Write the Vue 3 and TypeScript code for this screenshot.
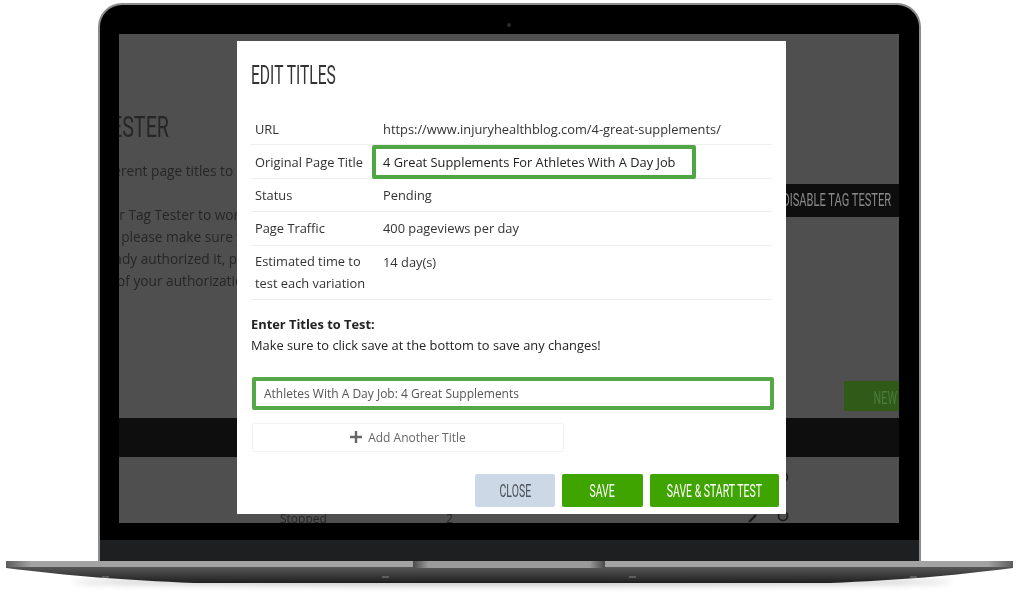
<script setup lang="ts">
interface InfoRow {
  label: string;
  value: string;
  highlight?: boolean;
}

const rows: InfoRow[] = [
  { label: "URL", value: "https://www.injuryhealthblog.com/4-great-supplements/" },
  { label: "Original Page Title", value: "4 Great Supplements For Athletes With A Day Job", highlight: true },
  { label: "Status", value: "Pending" },
  { label: "Page Traffic", value: "400 pageviews per day" },
  { label: "Estimated time to test each variation", value: "14 day(s)" },
];

// text behind the dialog, cut off by the left edge of the screen
const backLines = [
  { text: "Test different page titles to", left: -57 },
  { text: "", left: 0 },
  { text: "For Tag Tester to work", left: -15 },
  { text: "first, please make sure you", left: -30 },
  { text: "If already authorized it, please", left: -41 },
  { text: "end of your authorization", left: -30 },
];
</script>

<template>
  <div class="page">
    <div class="lid">
      <i class="camera"></i>
      <div class="screen">
        <div class="back-title"><span class="cond">TAG TESTER</span></div>
        <div class="back-text">
          <div
            v-for="(line, i) in backLines"
            :key="i"
            class="back-line"
            :style="{ marginLeft: line.left + 'px' }"
          >{{ line.text }}</div>
        </div>
        <div class="disable"><span class="cond">DISABLE TAG TESTER</span></div>
        <div class="new-row"><div class="new-btn"><span class="cond">NEW</span></div></div>
        <div class="black-bar"></div>
        <div class="stopped">
          <svg class="st-icons st-icons-up" width="50" height="14" viewBox="0 0 50 14">
            <circle cx="35" cy="7" r="4.5" stroke="#1c1c1c" stroke-width="1.6" fill="none" />
          </svg>
          <span class="st-name">Stopped</span>
          <span class="st-num">2</span>
          <svg class="st-icons" width="50" height="14" viewBox="0 0 50 14">
            <path d="M1 13 L8 6" stroke="#1c1c1c" stroke-width="2.4" fill="none" />
            <circle cx="35" cy="7" r="4.5" stroke="#1c1c1c" stroke-width="1.6" fill="none" />
          </svg>
        </div>

        <div class="modal">
          <h2 class="modal-title"><span class="cond">EDIT TITLES</span></h2>
          <div class="info">
            <div v-for="row in rows" :key="row.label" class="info-row">
              <div class="info-label">{{ row.label }}</div>
              <div class="info-value">
                <span v-if="row.highlight" class="hl">{{ row.value }}</span>
                <template v-else>{{ row.value }}</template>
              </div>
            </div>
          </div>
          <div class="enter">
            <b>Enter Titles to Test:</b>
            <div>Make sure to click save at the bottom to save any changes!</div>
          </div>
          <div class="title-input">Athletes With A Day Job: 4 Great Supplements</div>
          <div class="add-title">
            <svg width="12" height="12" viewBox="0 0 12 12">
              <path d="M6 0 V12 M0 6 H12" stroke="#666" stroke-width="2.4" />
            </svg>
            <span>Add Another Title</span>
          </div>
          <div class="actions">
            <div class="btn btn-close"><span class="cond">CLOSE</span></div>
            <div class="btn btn-save"><span class="cond">SAVE</span></div>
            <div class="btn btn-start"><span class="cond">SAVE &amp; START TEST</span></div>
          </div>
        </div>
      </div>
      <div class="chin"></div>
    </div>

    <svg class="base" width="1024" height="31" viewBox="0 0 1024 31">
      <defs>
        <linearGradient id="body" x1="0" y1="0" x2="0" y2="1">
          <stop offset="0" stop-color="#6a6a6a" />
          <stop offset="0.45" stop-color="#4a4a4a" />
          <stop offset="1" stop-color="#1f1f1f" />
        </linearGradient>
        <linearGradient id="band" x1="0" y1="0" x2="1" y2="0">
          <stop offset="0" stop-color="#5c5c5c" />
          <stop offset="0.025" stop-color="#a3a3a3" />
          <stop offset="0.975" stop-color="#a3a3a3" />
          <stop offset="1" stop-color="#5c5c5c" />
        </linearGradient>
        <linearGradient id="notch" x1="0" y1="0" x2="1" y2="0">
          <stop offset="0" stop-color="#4a4a4a" />
          <stop offset="0.08" stop-color="#9a9a9a" />
          <stop offset="0.92" stop-color="#9a9a9a" />
          <stop offset="1" stop-color="#4a4a4a" />
        </linearGradient>
        <filter id="soft" x="-5%" y="-100%" width="110%" height="300%">
          <feGaussianBlur stdDeviation="3" />
        </filter>
      </defs>
      <ellipse cx="512" cy="21" rx="440" ry="4" fill="#000" opacity="0.22" filter="url(#soft)" />
      <path d="M6 0 H1013 V7 C950 15 900 19 830 22 H194 C124 19 70 15 6 7 Z" fill="url(#body)" />
      <rect x="6" y="0" width="1007" height="6" fill="url(#band)" />
      <rect x="413" y="0" width="192" height="7" fill="url(#notch)" />
      <path d="M102 16 h7 M382 16 h7 M629 16 h7 M910 16 h7" stroke="#888" stroke-width="1" />
    </svg>
  </div>
</template>

<style scoped>
.page {
  position: relative;
  width: 1024px;
  height: 592px;
  padding-top: 3px;
  box-sizing: border-box;
  overflow: hidden;
  background: #fff;
  font-family: "Open Sans", "Liberation Sans", sans-serif;
  filter: blur(0.3px);
}

.cond {
  display: inline-block;
  flex: none;
  font-family: "Liberation Sans Narrow", Roboto, sans-serif;
  font-weight: 400;
  transform: scaleX(0.6);
  white-space: nowrap;
}

.lid {
  position: relative;
  display: flex;
  flex-direction: column;
  width: 823px;
  height: 558px;
  margin-left: 98px;
  padding-top: 29px;
  box-sizing: border-box;
  background: #000;
  border: 2px solid #8c8c8c;
  border-bottom: 0;
  border-radius: 24px 24px 0 0;
}

.camera {
  position: absolute;
  top: 18px;
  left: 407px;
  width: 4px;
  height: 4px;
  border-radius: 50%;
  background: #2b2b33;
}

.screen {
  position: relative;
  flex: none;
  width: 780px;
  height: 489px;
  margin-left: 19px;
  overflow: hidden;
  background: #4f4f4f;
  color: #262626;
}

.chin {
  flex: none;
  height: 21px;
  margin-top: 17px;
  background: #1e1f20;
}

.back-title {
  display: flex;
  justify-content: flex-end;
  width: 50px;
  height: 48px;
  padding-top: 70px;
  font-size: 29px;
  line-height: 46px;
  box-sizing: content-box;
}

.back-title .cond {
  transform: scaleX(0.68);
  transform-origin: right center;
}

.back-text {
  height: 132px;
  margin-top: 8px;
  font-size: 13.7px;
  line-height: 22px;
  filter: blur(0.4px);
}

.back-line {
  height: 22px;
  white-space: nowrap;
}

.disable {
  position: absolute;
  top: 150px;
  right: 0;
  display: flex;
  justify-content: flex-end;
  width: 240px;
  height: 33px;
  padding-right: 8px;
  box-sizing: border-box;
  background: #0e0e0e;
  color: #8a8a8a;
  font-size: 18.5px;
  line-height: 33px;
}

.disable .cond {
  transform-origin: right center;
}

.new-row {
  display: flex;
  justify-content: flex-end;
  height: 30px;
  margin-top: 89px;
}

.new-btn {
  display: flex;
  justify-content: flex-end;
  width: 55px;
  height: 30px;
  padding-right: 2px;
  box-sizing: border-box;
  background: #2f5a17;
  color: #4d7c3b;
  font-size: 18px;
  line-height: 33px;
}

.new-btn .cond {
  transform-origin: right center;
}

.black-bar {
  height: 39px;
  margin-top: 7px;
  background: #0e0e0e;
}

.stopped {
  position: relative;
  height: 65px;
  font-size: 12px;
}

.st-name,
.st-num,
.st-icons {
  position: absolute;
  top: 53px;
}

.st-name {
  left: 161px;
}

.st-num {
  left: 327px;
}

.st-icons {
  top: 52px;
  left: 629px;
}

.st-icons-up {
  top: 13px;
}

.modal {
  position: absolute;
  top: 7px;
  left: 118px;
  width: 549px;
  height: 473px;
  padding: 0 14px;
  box-sizing: border-box;
  background: #fff;
  color: #333;
  font-size: 12.85px;
}

.modal-title {
  height: 53px;
  margin: 18px 0 0;
  font-size: 26px;
  font-weight: 300;
  line-height: 31px;
  color: #333;
}

.modal-title .cond {
  transform-origin: left center;
}

.info-row {
  display: flex;
  align-items: center;
  height: 33.4px;
  box-sizing: border-box;
  border-bottom: 1px solid #eee;
  line-height: 22px;
}

.info-row:first-child {
  padding-top: 2px;
}

.info-row:last-child {
  height: 54px;
}

.info-label {
  flex: none;
  width: 132px;
  padding-left: 4px;
  box-sizing: border-box;
}

.info-row:last-child .info-label {
  padding-right: 14px;
}

.info-value {
  flex: 1;
}

.info-row:last-child .info-value {
  align-self: flex-start;
  padding-top: 5px;
}

.hl {
  display: inline-block;
  width: 324px;
  height: 34px;
  margin-left: -11px;
  padding-left: 7px;
  box-sizing: border-box;
  border: 4px solid #4fa743;
  border-radius: 2px;
  line-height: 26px;
  color: #222;
}

.enter {
  height: 77px;
  padding-top: 14px;
  box-sizing: border-box;
  color: #222;
  line-height: 21px;
}

.title-input {
  height: 33px;
  margin-left: 1px;
  margin-right: -2px;
  padding-left: 8px;
  box-sizing: border-box;
  border: 4px solid #54a845;
  border-radius: 2px;
  font-size: 12px;
  line-height: 26px;
  color: #555;
}

.add-title {
  display: flex;
  align-items: center;
  justify-content: center;
  gap: 6px;
  width: 312px;
  height: 29px;
  margin-top: 13px;
  margin-left: 1px;
  border: 1px solid #f1f1f1;
  border-radius: 2px;
  box-sizing: border-box;
  font-size: 12px;
  color: #666;
}

.actions {
  display: flex;
  justify-content: flex-end;
  gap: 7px;
  margin-top: 22px;
  margin-right: -7px;
}

.btn {
  display: flex;
  justify-content: center;
  height: 33px;
  border-radius: 2px;
  font-size: 17.5px;
  line-height: 35px;
  color: #fff;
}

.btn-close {
  width: 80px;
  background: #cdd8e6;
  color: #4a5058;
}

.btn-save {
  width: 81px;
  background: #3fa300;
}

.btn-start {
  width: 129px;
  background: #3fa300;
}

.base {
  position: absolute;
  left: 0;
  top: 561px;
}
</style>
